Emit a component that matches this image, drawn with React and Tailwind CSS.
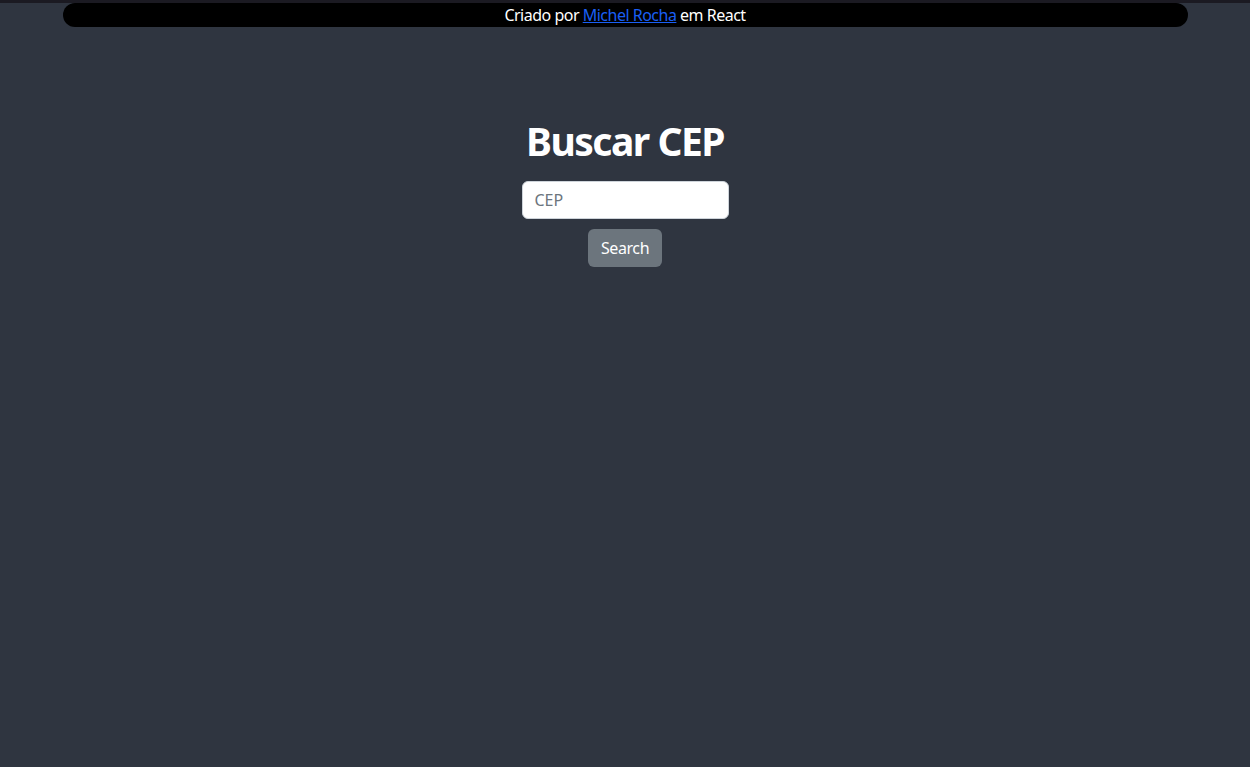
import React, { useState } from "react";

export default function App() {
  const [cep, setCep] = useState("");

  return (
    <div
      className="min-h-screen bg-[#2f3540] text-white"
      style={{ fontFamily: '"Noto Sans", "Open Sans", sans-serif' }}
    >
      <div className="h-[3px] bg-[#1b1a22]" />
      <div className="mx-auto flex h-6 w-[90%] items-center justify-center rounded-full bg-black text-base leading-6 tracking-[-0.5px]">
        <span>
          Criado por{" "}
          <a href="#" className="text-[#1a5ff5] underline">
            Michel Rocha
          </a>{" "}
          em React
        </span>
      </div>

      <div className="flex flex-col items-center pt-[90px]">
        <h1 className="mb-4 text-[39px] font-bold leading-[48px] tracking-[-1.5px]">Buscar CEP</h1>
        <input
          value={cep}
          onChange={(e) => setCep(e.target.value)}
          placeholder="CEP"
          className="h-[38px] w-[207px] rounded-md border border-[#ced4da] bg-white px-3 text-base text-[#212529] placeholder:text-[#6c757d] outline-none"
        />
        <button className="mt-[10px] h-[38px] w-[74px] rounded-md bg-[#6c757d] text-base tracking-[-0.4px] text-white">
          Search
        </button>
      </div>
    </div>
  );
}
